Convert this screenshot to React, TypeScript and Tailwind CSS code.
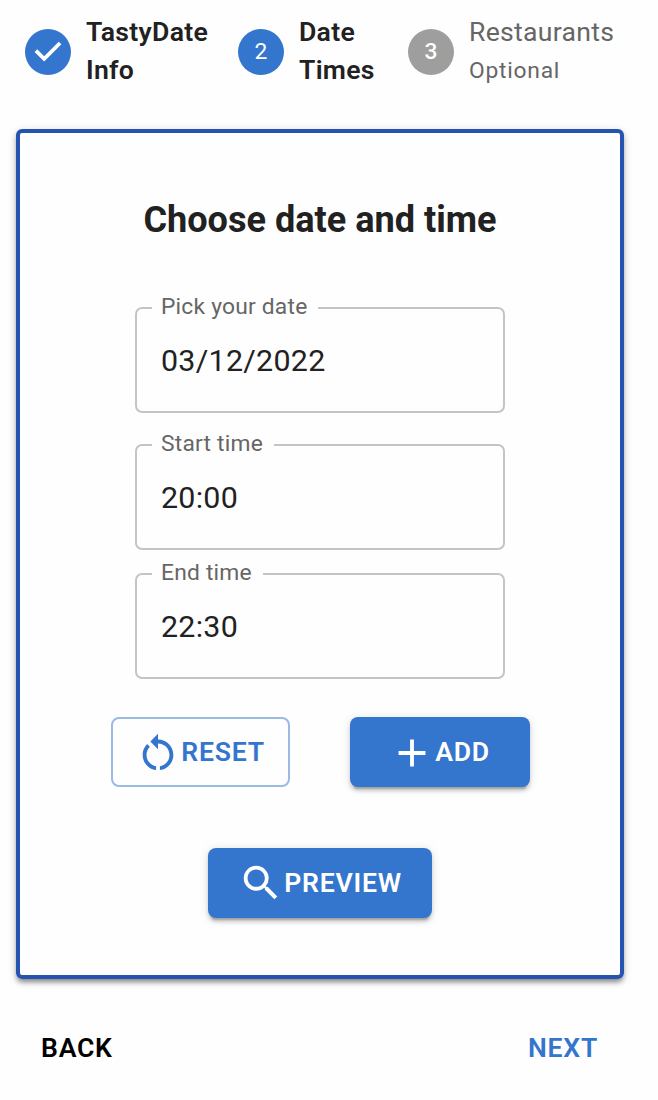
import React from "react";
import { MdAdd, MdRestartAlt, MdSearch } from "react-icons/md";

const raised =
  "shadow-[0_5.7px_1.9px_-3.8px_rgba(0,0,0,0.2),0_3.8px_3.8px_0_rgba(0,0,0,0.14),0_1.9px_9.5px_0_rgba(0,0,0,0.12)]";

function CheckBadge() {
  return (
    <svg viewBox="0 0 24 24" className="size-[46px] shrink-0 fill-[#3475cd]">
      <path d="M12 0a12 12 0 1 0 0 24 12 12 0 0 0 0-24zm-2 17l-5-5 1.4-1.4 3.6 3.6 7.6-7.6L19 8l-9 9z" />
    </svg>
  );
}

function Step({ n, done, children, className = "" }: { n?: string; done?: boolean; children: React.ReactNode; className?: string }) {
  return (
    <div className={`flex items-center ${className}`}>
      {done ? (
        <CheckBadge />
      ) : (
        <span className={`flex size-[46px] shrink-0 items-center justify-center rounded-full text-[22.8px] leading-none text-white ${n === "3" ? "bg-[#9e9e9e] font-medium" : "bg-[#3475cd]"}`}>{n}</span>
      )}
      <div className="ml-[15px] -mt-[2px] text-[26.6px] leading-[38px] tracking-[0.285px]">{children}</div>
    </div>
  );
}

function Field({ label, value, className = "" }: { label: string; value: string; className?: string }) {
  return (
    <fieldset className={`h-[115px] w-[370px] rounded-[7px] border-2 border-[#c4c4c4] pl-[15px] ${className}`}>
      <legend className="h-[19px] pl-[9px] pr-[11px] text-[22.8px] leading-[17px] tracking-[0.214px] text-[#666]">{label}</legend>
      <div className="pl-[9px] pt-[26px] text-[30.4px] leading-[36px] tracking-[0.285px] text-[#212121]">{value}</div>
    </fieldset>
  );
}

export default function App() {
  return (
    <div className="h-[1100px] w-[658px] overflow-hidden bg-[#fefefe] font-['Roboto',sans-serif] text-[#212121]">
      <div className="flex h-[104px] pl-[25px]">
        <Step done className="w-[213px]">
          <div className="font-semibold">TastyDate<br />Info</div>
        </Step>
        <Step n="2" className="w-[170px]">
          <div className="font-semibold">Date<br />Times</div>
        </Step>
        <Step n="3">
          <div className="text-[#666]">Restaurants</div>
          <div className="pt-px text-[22.8px] tracking-[0.76px] text-[#666]">Optional</div>
        </Step>
      </div>
      <main className="ml-4 mt-[25px] flex h-[850px] w-[608px] flex-col items-center rounded-[6px] border-4 border-[#2653b0] shadow-[0_4px_5px_-1px_rgba(0,0,0,0.4),0_2px_10px_0_rgba(0,0,0,0.15)]">
        <h1 className="mt-[64px] text-[36.1px] font-bold leading-[46px]">Choose date and time</h1>
        <Field className="mt-[55px]" label="Pick your date" value="03/12/2022" />
        <Field className="mt-[22px]" label="Start time" value="20:00" />
        <Field className="mt-[14px]" label="End time" value="22:30" />
        <div className="mt-[38px] flex gap-[60px] text-[26.6px] font-semibold tracking-[0.76px]">
          <button className="flex h-[70px] w-[179px] items-center justify-center rounded-[8px] border-2 border-[#9abae6] text-[#3475cd]">
            <MdRestartAlt className="mt-[2px] size-[46px]" />RESET
          </button>
          <button className={`flex h-[70px] w-[180px] items-center justify-center rounded-[8px] bg-[#3475cd] text-white ${raised}`}>
            <MdAdd className="mt-[2px] size-[46px]" />ADD
          </button>
        </div>
        <button className={`mt-[61px] flex h-[70px] w-[224px] items-center justify-center rounded-[8px] bg-[#3475cd] text-[26.6px] font-semibold tracking-[0.76px] text-white ${raised}`}>
          <MdSearch className="size-[46px]" />PREVIEW
        </button>
      </main>
      <footer className="mt-[51px] flex justify-between pl-[41px] pr-[60px] text-[26.6px] font-semibold leading-[36px] tracking-[0.76px]">
        <span className="text-black">BACK</span>
        <span className="text-[#3475cd]">NEXT</span>
      </footer>
    </div>
  );
}
